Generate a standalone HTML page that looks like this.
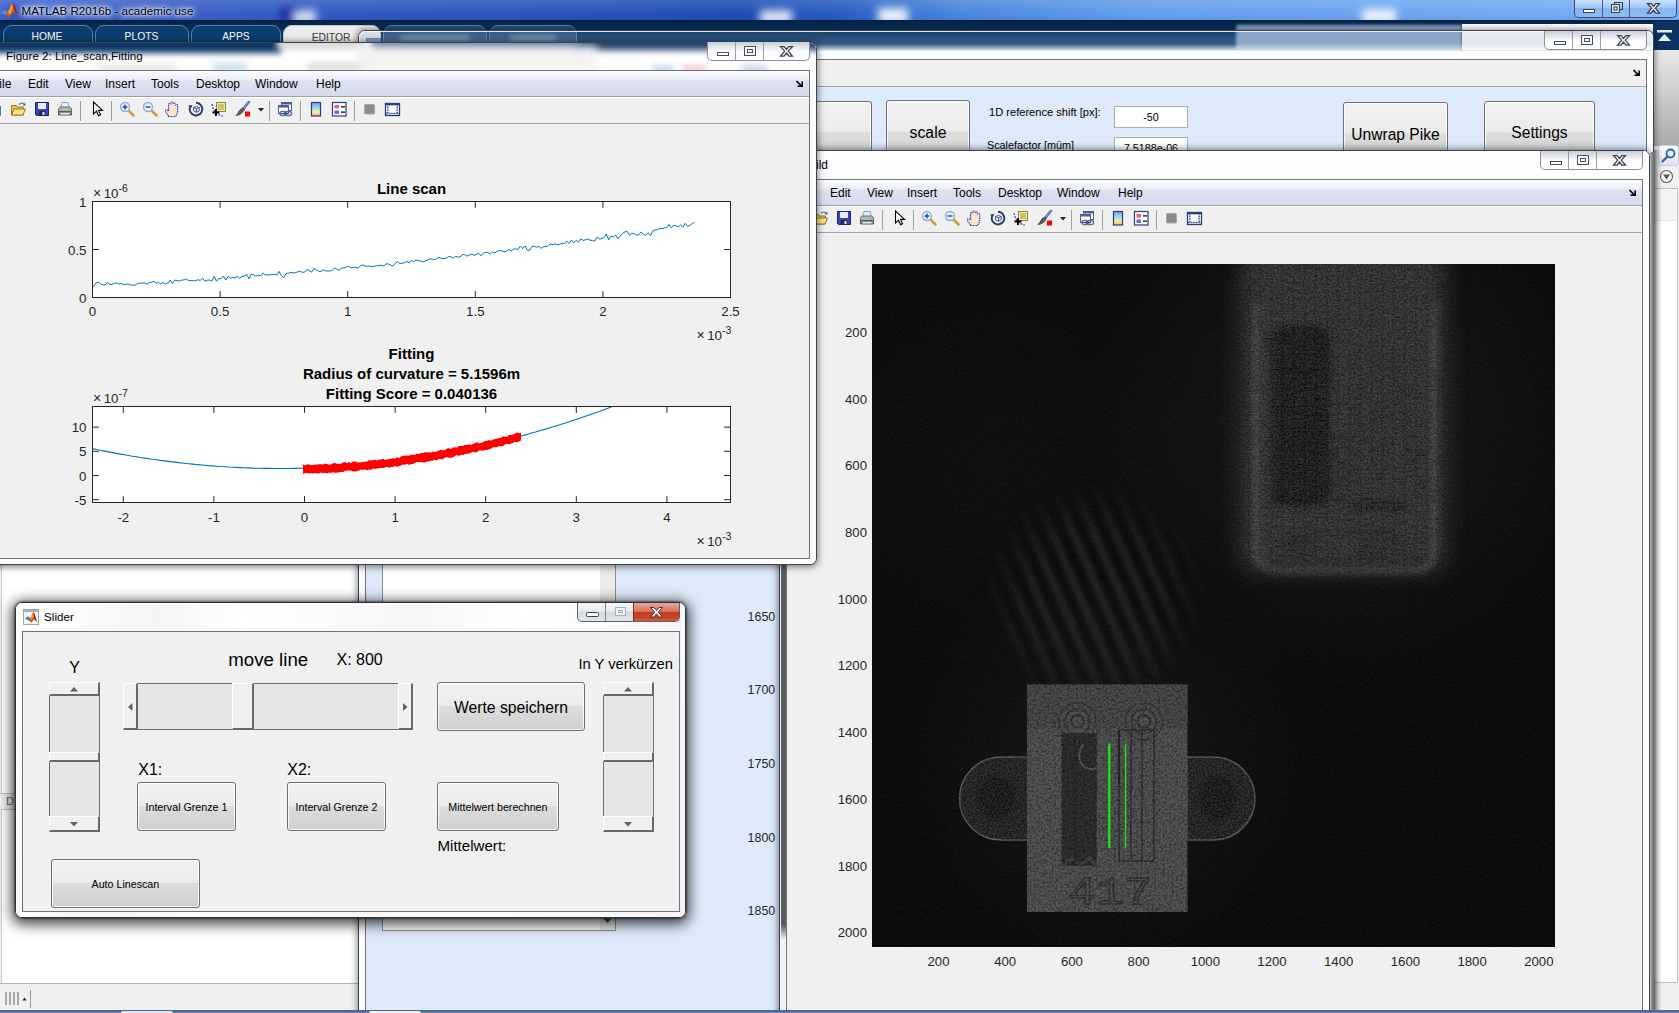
<!DOCTYPE html>
<html lang="en"><head><meta charset="utf-8"><title>MATLAB R2016b - academic use</title>
<style>
html,body{margin:0;padding:0}
body{width:1679px;height:1013px;overflow:hidden;position:relative;background:#f0f0f0;font-family:"Liberation Sans",sans-serif;font-size:12px;color:#000}
div,span,svg{position:absolute;box-sizing:border-box}
.t{white-space:nowrap;line-height:1}
.win{border:1px solid #3c4450;border-radius:7px}
.win::after{content:"";position:absolute;left:0;top:0;right:0;bottom:0;border:1px solid rgba(255,255,255,.85);border-radius:6px}
.cap{border:1px solid #8a8f99;border-top:0;border-radius:0 0 5px 5px;background:linear-gradient(#c9cdd6 0,#eef0f3 40%,#fff 55%,#fff 100%);overflow:hidden}
.cap i{position:absolute;top:0;bottom:0;width:1px;background:#9a9fa8}
.client{border:1px solid #6f7379;background:#f0f0f0;overflow:hidden}
.menubar{left:0;right:0;top:0;height:26px;background:linear-gradient(#fbfcfe 0,#eceef7 35%,#dfe2f0 40%,#d6daec 100%);border-bottom:1px solid #a0a0a0}
.menubar .t{top:7px;font-size:12px}
.toolbar{left:0;right:0;top:26px;height:27px;background:#f0f0f0;border-bottom:1px solid #a5a5a5;border-top:1px solid #fff}
.sep{top:3px;width:1px;height:20px;background:#a0a0a0;border-right:0}
.btn{border:1px solid #707070;border-radius:3px;background:linear-gradient(#f2f2f2 0,#ebebeb 48%,#dddddd 50%,#cfcfcf 100%);box-shadow:inset 0 0 0 1px rgba(255,255,255,.8)}
.btn .t{left:0;right:0;text-align:center}
.tk{font-size:12.4px;color:#262626}
</style></head><body>
<!-- ===== MATLAB main window ===== -->
<div id="mtitle" style="left:0;top:0;width:1679px;height:21px;background:linear-gradient(90deg,#4469cf 0,#3a60c7 12%,#315ac1 22%,#2a55bc 33%,#224fb3 44%,#2a5fc3 50%,#4c88de 57%,#66a0ec 68%,#70a9f1 85%,#7bb2f5 100%);overflow:hidden">
  <div style="left:0;top:0;width:1679px;height:21px;background:linear-gradient(rgba(255,255,255,.12),rgba(255,255,255,0) 60%,rgba(0,0,40,.08))"></div>
  <div style="left:280px;top:8px;width:20px;height:14px;background:#0a1a8a;filter:blur(4px);opacity:.7"></div><div style="left:292px;top:10px;width:24px;height:14px;background:#fff;filter:blur(4px);opacity:.8"></div>
  <div style="left:760px;top:10px;width:32px;height:14px;background:#fff;filter:blur(4px);opacity:.85"></div>
  <div style="left:878px;top:8px;width:30px;height:16px;background:#fff;filter:blur(4px);opacity:.9"></div>
  <div style="left:1362px;top:9px;width:34px;height:14px;background:#fff;filter:blur(4px);opacity:.9"></div>
  <div style="left:4px;top:5px;width:22px;height:16px;background:#1b2fb5;filter:blur(4px);opacity:.35"></div>
  <svg style="left:0;top:2px" width="20" height="18" viewBox="0 0 20 18"><path d="M0 11 L5 8 L8 10 L12 1 L13.5 1.5 L18 13 L13 10 L9 16 L6 13 Z" fill="#d8501c"/><path d="M0 11 L5 8 L8 10 L6 13 Z" fill="#4d8fd0"/><path d="M12 1 L13.5 1.5 L18 13 L15 10 Z" fill="#8c1d10"/><path d="M8 10 L12 1 L13 6 L10 13Z" fill="#f0a030"/></svg>
  <span class="t" style="left:21.500px;top:5px;font-size:11.650px;color:#000;text-shadow:0 0 6px #fff,0 0 6px #fff,0 0 3px #fff">MATLAB R2016b - academic use</span>
  <!-- caption buttons -->
  <div class="cap" style="left:1574px;top:0;width:103px;height:18px;background:linear-gradient(rgba(255,255,255,.55),rgba(255,255,255,.25) 45%,rgba(255,255,255,.05) 50%,rgba(255,255,255,.2));border-color:#3a4a70">
    <i style="left:27px;background:#4a5a80"></i><i style="left:54px;background:#4a5a80"></i>
    <svg style="left:0;top:0" width="103" height="18" viewBox="0 0 103 18"><rect x="8.500" y="9.500" width="11" height="3" fill="#fff" stroke="#3b3f55"/><rect x="39.500" y="2.500" width="8" height="7" fill="none" stroke="#3b3f55"/><rect x="36.500" y="4.500" width="8" height="8" fill="#dfe7f5" stroke="#3b3f55"/><rect x="39" y="7" width="3" height="3" fill="none" stroke="#3b3f55"/><path d="M72.500 3.500h3.600l2.400 2.900 2.400-2.900h3.600l-4.200 4.700 4.200 4.800h-3.600l-2.400-3-2.400 3h-3.600l4.200-4.800z" fill="#fff" stroke="#343a55" stroke-width="1.250"/></svg>
  </div>
</div>
<!-- navy toolstrip band -->
<div style="left:0;top:21px;width:1679px;height:30px;background:linear-gradient(#03244a 0,#0a3461 35%,#0b3866 100%)"></div>
<div style="left:0;top:20px;width:1679px;height:2px;background:#082044"></div>
<!-- tabs -->
<div style="left:3px;top:25px;width:90px;height:24px;border:1px solid #5d82ab;border-radius:9px 9px 0 0;background:#0c3d6e"></div>
<div style="left:95px;top:25px;width:94px;height:24px;border:1px solid #5d82ab;border-radius:9px 9px 0 0;background:#0c3d6e"></div>
<div style="left:191px;top:25px;width:90px;height:24px;border:1px solid #5d82ab;border-radius:9px 9px 0 0;background:#0c3d6e"></div>
<div style="left:283px;top:25px;width:98px;height:24px;border:1px solid #c8c8c8;border-radius:9px 9px 0 0;background:#ececec"></div>
<div style="left:383px;top:25px;width:104px;height:24px;border:1px solid #5d82ab;border-radius:9px 9px 0 0;background:#2a4f7b"></div>
<div style="left:489px;top:25px;width:88px;height:24px;border:1px solid #5d82ab;border-radius:9px 9px 0 0;background:#2a4f7b"></div>
<span class="t" style="left:3px;top:32px;width:88px;text-align:center;font-size:10.300px;color:#fff">HOME</span>
<span class="t" style="left:95px;top:32px;width:93px;text-align:center;font-size:10.300px;color:#fff">PLOTS</span>
<span class="t" style="left:191px;top:32px;width:90px;text-align:center;font-size:10.300px;color:#fff">APPS</span>
<span class="t" style="left:283px;top:33px;width:96px;text-align:center;font-size:10.300px;color:#3a3a3a">EDITOR</span>
<div style="left:400px;top:35px;width:70px;height:6px;background:#7f98b8;filter:blur(2.500px);opacity:.8"></div><div style="left:510px;top:35px;width:46px;height:6px;background:#7f98b8;filter:blur(2.500px);opacity:.8"></div>
<!-- quick access toolbar + search box (behind glass) -->
<div style="left:1236px;top:25px;width:226px;height:24px;background:#8ba5c6;border-radius:3px 0 0 0;filter:blur(1.5px)"></div>
<div style="left:1462px;top:24px;width:192px;height:26px;background:#fff"></div>
<!-- right strip of main window -->
<div style="left:1653px;top:21px;width:26px;height:29px;background:#0a3360"></div>
<svg style="left:1656px;top:29px" width="18" height="14" viewBox="0 0 18 14"><rect x="1" y="1" width="15" height="2.500" fill="#e8eef7"/><path d="M8.500 5 L15 12 H2 Z" fill="#e8eef7"/></svg>
<div style="left:1653px;top:50px;width:26px;height:96px;background:linear-gradient(#e9e9e9,#d0d0d0 40%,#a9a9a9 100%)"></div>
<div style="left:1653px;top:146px;width:26px;height:867px;background:#f0f0f0"></div>
<div style="left:1658px;top:145px;width:21px;height:21px;border:1px solid #c5cad3;border-radius:3px;background:linear-gradient(#fdfdfd,#dfe3ea)"></div>
<svg style="left:1660px;top:147px" width="18" height="18" viewBox="0 0 18 18"><circle cx="10.500" cy="6.500" r="4" fill="#eaf2fb" stroke="#2a62b8" stroke-width="1.800"/><path d="M7.500 9.500 L2.500 14.500" stroke="#2a62b8" stroke-width="2.400" stroke-linecap="round"/></svg>
<svg style="left:1658px;top:168px" width="18" height="18" viewBox="0 0 18 18"><circle cx="8.500" cy="8.500" r="6" fill="#f4f4f4" stroke="#666" stroke-width="1.100"/><path d="M5 6.500h7l-3.500 5z" fill="#555"/></svg>
<div style="left:1654px;top:188px;width:24px;height:795px;background:#fff;border:1px solid #b9bdc4;border-left:0"></div>
<div style="left:1654px;top:189px;width:22px;height:32px;background:#f3f3f3;border-bottom:1px solid #e2e2e2"></div>
<!-- left document area of main window -->
<div style="left:0;top:50px;width:360px;height:934px;background:#fff;border-left:1px solid #f0f0f0"></div><div style="left:1px;top:50px;width:1px;height:934px;background:#c9c9c9"></div>
<div style="left:0;top:983px;width:360px;height:28px;background:#f0f0f0;border-top:1px solid #b4b4b4"></div>
<svg style="left:4px;top:990px" width="30" height="18" viewBox="0 0 30 18"><g fill="#a8a8a8"><rect x="1" y="2" width="2" height="13"/><rect x="5" y="2" width="2" height="13"/><rect x="9" y="2" width="2" height="13"/><rect x="13" y="2" width="2" height="13"/></g><path d="M18.500 10.500h4l-2-3z" fill="#222"/><rect x="26" y="0" width="1" height="18" fill="#9a9a9a"/></svg>
<div style="left:0;top:793px;width:16px;height:17px;background:#f0f0f0;border:1px solid #c4c4c4;border-left:0"></div>
<span class="t" style="left:6px;top:796px;font-size:11px;color:#666">D</span>
<!-- ===== GUI window (scale / Unwrap Pike / Settings) ===== -->
<div class="win" style="left:358px;top:30px;width:1296px;height:1000px;background:linear-gradient(rgba(120,150,190,.14) 0,rgba(150,175,210,.3) 13px,rgba(255,255,255,.9) 20px,#fff 24px,#fdfdfe 100%);box-shadow:0 0 6px 1px rgba(0,0,0,.45)"></div>
<div style="left:366px;top:38px;width:15px;height:12px;border:1px solid #7a8aa0;background:linear-gradient(#7f9fcd 0,#7f9fcd 3px,#eef2f7 3px)"></div>
<div class="cap" style="left:1544px;top:31px;width:103px;height:19px"><i style="left:27px"></i><i style="left:55px"></i>
<svg style="left:0;top:0" width="103" height="19" viewBox="0 0 103 19"><rect x="9.500" y="10.500" width="11" height="3" fill="#fff" stroke="#4a4e63"/><rect x="36.500" y="4.500" width="11" height="9" fill="#fff" stroke="#4a4e63"/><rect x="39.500" y="7.500" width="5" height="3" fill="#fff" stroke="#4a4e63"/><path d="M72.500 4.500h3.600l2.400 2.900 2.400-2.900h3.600l-4.200 4.700 4.200 4.800h-3.600l-2.400-3-2.400 3h-3.600l4.200-4.800z" fill="#fff" stroke="#3d4257" stroke-width="1.250"/></svg></div>
<div class="client" style="left:365px;top:59px;width:1282px;height:952px;background:#deeafa">
  <div style="left:0;top:0;width:1282px;height:27px;background:#f0f0f0;border-bottom:1px solid #a3a3a3"></div>
  <svg style="left:1267px;top:9px" width="8" height="8" viewBox="0 0 8 8"><path d="M0.500 1 L5 5.500 M1.500 6.200h4.700v-4.700" stroke="#000" stroke-width="1.600" fill="none"/></svg>
  <!-- listbox -->
  <div style="left:16px;top:60px;width:234px;height:811px;background:#fff;border:1px solid #8e8f8f"></div>
  <div style="left:234px;top:61px;width:15px;height:809px;background:#ebebeb"></div>
  <svg style="left:237px;top:858px" width="9" height="6" viewBox="0 0 9 6"><path d="M0.500 0.500h8l-4 4.500z" fill="#444"/></svg>
  <!-- axes tick labels -->
  <span class="t tk" style="left:360px;top:551px;width:49.200px;text-align:right">1650</span>
  <span class="t tk" style="left:360px;top:624px;width:49.200px;text-align:right">1700</span>
  <span class="t tk" style="left:360px;top:698px;width:49.200px;text-align:right">1750</span>
  <span class="t tk" style="left:360px;top:772px;width:49.200px;text-align:right">1800</span>
  <span class="t tk" style="left:360px;top:845px;width:49.200px;text-align:right">1850</span>
  <!-- controls (coordinates relative to client: x-366, y-60) -->
  <div class="btn" style="left:430px;top:41px;width:76px;height:64px;border-radius:0 3px 3px 0;border-left:0"></div>
  <div class="btn" style="left:520px;top:40px;width:84px;height:64px"><span class="t" style="top:24px;font-size:15.800px">scale</span></div>
  <span class="t" style="left:623px;top:47px;font-size:11.100px">1D reference shift [px]:</span>
  <div style="left:748px;top:46px;width:74px;height:22px;background:#fff;border:1px solid #abadb3"><span class="t" style="left:0;right:0;top:5px;text-align:center;font-size:10.700px">-50</span></div>
  <span class="t" style="left:621px;top:80px;font-size:10.800px">Scalefactor [müm]</span>
  <div style="left:748px;top:77px;width:74px;height:22px;background:#fff;border:1px solid #abadb3"><span class="t" style="left:0;right:0;top:5px;text-align:center;font-size:10.700px">7.5188e-06</span></div>
  <div class="btn" style="left:977px;top:42px;width:105px;height:64px"><span class="t" style="top:24px;font-size:15.600px">Unwrap Pike</span></div>
  <div class="btn" style="left:1118px;top:41px;width:111px;height:64px"><span class="t" style="top:23px;font-size:15.600px">Settings</span></div>
</div>
<!-- ===== figure window "Bild" with image ===== -->
<div class="win" style="left:779px;top:150px;width:871px;height:880px;background:linear-gradient(90deg,#8a8f96 0,#575b62 2px,#54585f 5px,#6a6e75 6.500px,#b5b8bd 7.500px,#fff 8px,#fff 100%);box-shadow:0 0 7px 1px rgba(0,0,0,.5)"></div>
<div style="left:780px;top:151px;width:869px;height:29px;background:linear-gradient(#fdfdfe,#fff);border-radius:6px 6px 0 0"></div>
<div style="left:780px;top:925px;width:7px;height:90px;background:linear-gradient(rgba(255,255,255,0),#f2f2f2 14px)"></div>
<span class="t" style="left:700px;top:159px;width:128px;text-align:right;font-size:12px">Figure 1: Bild</span>
<div class="cap" style="left:1540px;top:151px;width:103px;height:19px"><i style="left:27px"></i><i style="left:55px"></i><svg style="left:0;top:0" width="103" height="19" viewBox="0 0 103 19"><rect x="9.500" y="10.500" width="11" height="3" fill="#fff" stroke="#4a4e63"/><rect x="36.500" y="4.500" width="11" height="9" fill="#fff" stroke="#4a4e63"/><rect x="39.500" y="7.500" width="5" height="3" fill="#fff" stroke="#4a4e63"/><path d="M72.500 4.500h3.600l2.400 2.900 2.400-2.900h3.600l-4.200 4.700 4.200 4.800h-3.600l-2.400-3-2.400 3h-3.600l4.200-4.800z" fill="#fff" stroke="#3d4257" stroke-width="1.250"/></svg></div>
<div class="client" style="left:786px;top:179px;width:857px;height:832px">
<div class="menubar"><span class="t" style="left:7px">File</span><span class="t" style="left:43px">Edit</span><span class="t" style="left:80px">View</span><span class="t" style="left:120px">Insert</span><span class="t" style="left:166px">Tools</span><span class="t" style="left:211px">Desktop</span><span class="t" style="left:270px">Window</span><span class="t" style="left:331px">Help</span><svg style="left:842px;top:9px" width="8" height="8" viewBox="0 0 8 8"><path d="M0.500 1 L5 5.500 M1.500 6.200h4.700v-4.700" stroke="#000" stroke-width="1.600" fill="none"/></svg></div>
<div class="toolbar"><svg style="left:2px;top:3px" width="16" height="16" viewBox="0 0 16 16"><path d="M2.500 1.500h7l4 4v9h-11z" fill="#fff" stroke="#5b6f9a"/><path d="M9.500 1.500v4h4" fill="#dfe8f7" stroke="#5b6f9a"/></svg><svg style="left:25px;top:3px" width="17" height="16" viewBox="0 0 17 16"><path d="M1.500 4.500h5l1 1.500h6v8h-12z" fill="#e8c04a" stroke="#9a7a1a"/><path d="M1.500 14l2.500-6h11.500l-2.500 6z" fill="#fbe58a" stroke="#9a7a1a"/><path d="M9 3.500c2-2 4-2 5.500 0" fill="none" stroke="#3f62b0" stroke-width="1.200"/><path d="M15.500 1.500v3h-3z" fill="#3f62b0"/></svg><svg style="left:49px;top:3px" width="16" height="16" viewBox="0 0 16 16"><path d="M1.500 1.500h13v13h-12l-1-1z" fill="#3a44b8" stroke="#1c246e"/><rect x="4" y="2" width="8" height="6" fill="#e8ecf8"/><rect x="4.500" y="10" width="7" height="4.500" fill="#20285e"/><rect x="8.500" y="11" width="2" height="3" fill="#e8ecf8"/></svg><svg style="left:72px;top:3px" width="16" height="16" viewBox="0 0 16 16"><path d="M5 1.500h6l1.500 5h-9z" fill="#dfefff" stroke="#8aa0c0"/><path d="M1.500 7.500l2-1.500h9l2 1.500v5h-13z" fill="#b5b5b5" stroke="#6a6a6a"/><path d="M1.500 10.500h13v3.500h-13z" fill="#8c8c8c" stroke="#5a5a5a"/><rect x="3.500" y="12" width="9" height="1.500" fill="#e9e9e9"/><rect x="11.500" y="8.500" width="1.500" height="1" fill="#4c4"/></svg><div class="sep" style="left:95px"></div><svg style="left:104.5px;top:3px" width="16" height="16" viewBox="0 0 16 16"><path d="M3.500 1v12l3-2.800 2 4.600 2-1-2-4.400h4z" fill="#fff" stroke="#000" stroke-width="1.100" stroke-linejoin="miter"/></svg><div class="sep" style="left:126px"></div><svg style="left:134px;top:3px" width="16" height="16" viewBox="0 0 16 16"><path d="M9 9l5.500 5.500" stroke="#d89a3c" stroke-width="2.600" stroke-linecap="round"/><circle cx="6" cy="6" r="4.500" fill="#e9f4ff" stroke="#8ab0dd" stroke-width="1.300"/><path d="M3.500 6h5M6 3.500v5" stroke="#2a3fb0" stroke-width="1.400"/></svg><svg style="left:157px;top:3px" width="16" height="16" viewBox="0 0 16 16"><path d="M9 9l5.500 5.500" stroke="#d89a3c" stroke-width="2.600" stroke-linecap="round"/><circle cx="6" cy="6" r="4.500" fill="#e9f4ff" stroke="#8ab0dd" stroke-width="1.300"/><path d="M3.500 6h5" stroke="#2a3fb0" stroke-width="1.400"/></svg><svg style="left:180px;top:3px" width="16" height="16" viewBox="0 0 16 16"><path transform="translate(-1.3 0) scale(1.22 1)" d="M4 15.500c-.5-2.500-3-4.500-3-6 0-1 1.300-1.300 2.200-.2l.8 1v-6.800c0-1.300 1.800-1.300 1.800 0v-1.500c0-1.300 1.900-1.300 1.900 0v1c0-1.300 1.900-1.300 1.900 0v1.500c0-1.200 1.800-1.200 1.800 0v5.500c0 2.500-1 4-1.500 5.500z" fill="#fde3cc" stroke="#2f4fa8" stroke-width="1" stroke-dasharray="1.500 .7"/></svg><svg style="left:203px;top:3px" width="16" height="16" viewBox="0 0 16 16"><path d="M8 1.800a6.300 6.300 0 1 1-6 4.400" fill="none" stroke="#2c3e70" stroke-width="2"/><path d="M.2 4.500l4.300-.5-2 4z" fill="#2c3e70"/><path d="M5.500 6.500l3-1.200 2.800 1.200v3.300l-2.800 1.500-3-1.500z M5.500 6.500l3 1.200 2.800-1.200M8.500 7.700v3.600" fill="#dfe6f5" stroke="#2c3e70" stroke-width=".8"/></svg><svg style="left:226px;top:3px" width="16" height="16" viewBox="0 0 16 16"><rect x="5.500" y="1.500" width="9" height="9" fill="#f6ec9c" stroke="#8d8632"/><path d="M7 4h6M7 6h6M7 8h6" stroke="#8d8632" stroke-width=".8"/><path d="M1 3c1 6 4 11 11 12" fill="none" stroke="#1c24d8" stroke-width="1.100" stroke-dasharray="2 1.200"/><path d="M1.500 11.500h7M5 8v7" stroke="#000" stroke-width="2"/></svg><svg style="left:250px;top:3px" width="16" height="16" viewBox="0 0 16 16"><path d="M14.800 1.200l-5.500 7-1.500-1.200 5.500-6.800c.8-.8 2 .2 1.500 1z" fill="#7f9be0" stroke="#3c4f9a" stroke-width=".8"/><path d="M7.500 7.200l1.800 1.400c-1 2.800-4.500 5.900-8.300 5.900 2.500-1.500 2.500-5.800 6.500-7.300z" fill="#5d5d5d" stroke="#2a2a2a" stroke-width=".7"/><rect x="10" y="10.500" width="5" height="5" fill="#f00"/></svg><svg style="left:272.5px;top:10px" width="6" height="4" viewBox="0 0 6 4"><path d="M0 0h6l-3 3.500z" fill="#222"/></svg><div class="sep" style="left:284px"></div><svg style="left:292px;top:3px" width="16" height="16" viewBox="0 0 16 16"><rect x="4.500" y="1.500" width="10" height="8" fill="#fff" stroke="#4a5f99"/><rect x="4.500" y="1.500" width="10" height="2" fill="#4a5f99"/><rect x="1.500" y="4.500" width="10" height="8" fill="#fff" stroke="#4a5f99"/><rect x="1.500" y="4.500" width="10" height="2" fill="#4a5f99"/><rect x="3" y="10.500" width="6" height="4" rx="2" fill="none" stroke="#56709f" stroke-width="1.400"/><rect x="8" y="10.500" width="6.500" height="4" rx="2" fill="none" stroke="#56709f" stroke-width="1.400"/><path d="M6 12.500h5" stroke="#2c3e70" stroke-width="1.400"/></svg><div class="sep" style="left:315px"></div><svg style="left:323px;top:3px" width="16" height="16" viewBox="0 0 16 16"><defs><linearGradient id="cbga" x1="0" y1="0" x2="0" y2="1"><stop offset="0" stop-color="#8f8df0"/><stop offset=".35" stop-color="#8fd8f0"/><stop offset=".7" stop-color="#f8f0a0"/><stop offset="1" stop-color="#f0b080"/></linearGradient></defs><rect x="3.500" y="1.500" width="9" height="13.500" fill="url(#cbga)" stroke="#2c3c80" stroke-width="1.200"/></svg><svg style="left:345.5px;top:3px" width="16" height="16" viewBox="0 0 16 16"><rect x="1.500" y="1.500" width="13.500" height="13.500" fill="#fff" stroke="#2c3c80" stroke-width="1.200"/><rect x="3.500" y="4" width="4.500" height="3.500" fill="#e86868"/><rect x="3.500" y="9.500" width="4.500" height="3.500" fill="#6868e8"/><path d="M10 5.800h4M10 11.200h4" stroke="#000" stroke-width="1.300"/></svg><div class="sep" style="left:369px"></div><svg style="left:377px;top:3px" width="16" height="16" viewBox="0 0 16 16"><rect x="2.500" y="3.500" width="10" height="9.500" rx="1" fill="#8c8c8c" stroke="#a8a8a8"/></svg><svg style="left:399px;top:3px" width="17" height="16" viewBox="0 0 17 16"><rect x="1.500" y="2.500" width="14" height="12" fill="#fff" stroke="#2c3c80" stroke-width="1.300"/><rect x="1.500" y="2.500" width="14" height="1.800" fill="#2c3c80"/><path d="M3.800 4.500v7.500M13.200 4.500v7.500M2 12.500h13" stroke="#2c3c80" stroke-width="1.300" stroke-dasharray="1 .6"/></svg></div>
<span class="t tk" style="left:20px;top:145.9px;width:60px;text-align:right;font-size:13.200px">200</span>
<span class="t tk" style="left:121.5px;top:775.200px;width:60px;text-align:center;font-size:13.200px">200</span>
<span class="t tk" style="left:20px;top:212.6px;width:60px;text-align:right;font-size:13.200px">400</span>
<span class="t tk" style="left:188.2px;top:775.200px;width:60px;text-align:center;font-size:13.200px">400</span>
<span class="t tk" style="left:20px;top:279.3px;width:60px;text-align:right;font-size:13.200px">600</span>
<span class="t tk" style="left:254.9px;top:775.200px;width:60px;text-align:center;font-size:13.200px">600</span>
<span class="t tk" style="left:20px;top:346.0px;width:60px;text-align:right;font-size:13.200px">800</span>
<span class="t tk" style="left:321.6px;top:775.200px;width:60px;text-align:center;font-size:13.200px">800</span>
<span class="t tk" style="left:20px;top:412.7px;width:60px;text-align:right;font-size:13.200px">1000</span>
<span class="t tk" style="left:388.3px;top:775.200px;width:60px;text-align:center;font-size:13.200px">1000</span>
<span class="t tk" style="left:20px;top:479.4px;width:60px;text-align:right;font-size:13.200px">1200</span>
<span class="t tk" style="left:455.0px;top:775.200px;width:60px;text-align:center;font-size:13.200px">1200</span>
<span class="t tk" style="left:20px;top:546.1px;width:60px;text-align:right;font-size:13.200px">1400</span>
<span class="t tk" style="left:521.7px;top:775.200px;width:60px;text-align:center;font-size:13.200px">1400</span>
<span class="t tk" style="left:20px;top:612.8px;width:60px;text-align:right;font-size:13.200px">1600</span>
<span class="t tk" style="left:588.4px;top:775.200px;width:60px;text-align:center;font-size:13.200px">1600</span>
<span class="t tk" style="left:20px;top:679.5px;width:60px;text-align:right;font-size:13.200px">1800</span>
<span class="t tk" style="left:655.1px;top:775.200px;width:60px;text-align:center;font-size:13.200px">1800</span>
<span class="t tk" style="left:20px;top:746.2px;width:60px;text-align:right;font-size:13.200px">2000</span>
<span class="t tk" style="left:721.8px;top:775.200px;width:60px;text-align:center;font-size:13.200px">2000</span>
<svg style="left:85px;top:84px" width="683" height="683" viewBox="0 0 683 683"><defs>
<filter color-interpolation-filters="sRGB" id="nz" x="0" y="0" width="100%" height="100%"><feTurbulence type="fractalNoise" baseFrequency="0.75" numOctaves="2" seed="4"/><feColorMatrix type="matrix" values="0 0 0 0 1  0 0 0 0 1  0 0 0 0 1  1.6 1.6 0 0 -1.25"/></filter>
<filter color-interpolation-filters="sRGB" id="nz2" x="0" y="0" width="100%" height="100%"><feTurbulence type="fractalNoise" baseFrequency="0.45" numOctaves="3" seed="11"/><feColorMatrix type="matrix" values="0 0 0 0 0  0 0 0 0 0  0 0 0 0 0  1.8 1.8 0 0 -1.45"/></filter>
<filter color-interpolation-filters="sRGB" id="b6" x="-30%" y="-30%" width="160%" height="160%"><feGaussianBlur stdDeviation="10"/></filter>
<filter color-interpolation-filters="sRGB" id="b3" x="-20%" y="-20%" width="140%" height="140%"><feGaussianBlur stdDeviation="3.500"/></filter>
<filter color-interpolation-filters="sRGB" id="b2" x="-20%" y="-20%" width="140%" height="140%"><feGaussianBlur stdDeviation="2"/></filter>
<filter color-interpolation-filters="sRGB" id="tex" x="-30%" y="-30%" width="160%" height="160%"><feTurbulence type="fractalNoise" baseFrequency="0.55" numOctaves="2" seed="5" result="t"/><feColorMatrix in="t" type="matrix" values="0 0 0 0 1  0 0 0 0 1  0 0 0 0 1  2.2 2.2 0 0 -1.75" result="n"/><feComposite in="n" in2="SourceGraphic" operator="in" result="nn"/><feComposite in="nn" in2="SourceGraphic" operator="arithmetic" k1="0" k2="0.10" k3="1" k4="0"/></filter>
<filter color-interpolation-filters="sRGB" id="tex2" x="-30%" y="-30%" width="160%" height="160%"><feTurbulence type="fractalNoise" baseFrequency="0.55" numOctaves="2" seed="5" result="t"/><feColorMatrix in="t" type="matrix" values="0 0 0 0 1  0 0 0 0 1  0 0 0 0 1  2.2 2.2 0 0 -1.75" result="n"/><feComposite in="n" in2="SourceGraphic" operator="in" result="nn"/><feComposite in="nn" in2="SourceGraphic" operator="arithmetic" k1="0" k2="0.10" k3="1" k4="0" result="s1"/><feTurbulence type="turbulence" baseFrequency="0.09 0.5" numOctaves="2" seed="9" result="t2"/><feColorMatrix in="t2" type="matrix" values="0 0 0 0 1  0 0 0 0 1  0 0 0 0 1  2.5 2.5 0 0 -0.55" result="n2"/><feComposite in="n2" in2="SourceGraphic" operator="in" result="nn2"/><feComposite in="nn2" in2="s1" operator="arithmetic" k1="0" k2="0.045" k3="1" k4="0"/></filter>
<radialGradient id="mg"><stop offset="0" stop-color="#fff"/><stop offset=".55" stop-color="#fff" stop-opacity=".8"/><stop offset="1" stop-color="#fff" stop-opacity="0"/></radialGradient>
<mask id="mS"><ellipse cx="222" cy="335" rx="115" ry="120" fill="url(#mg)"/></mask>
<clipPath id="cpS"><polygon points="120,250 250,215 345,330 330,425 170,425 120,330"/></clipPath>
<clipPath id="cpC"><rect x="155" y="420.500" width="160.500" height="227.500"/></clipPath>
<clipPath id="cpI"><rect x="0" y="0" width="683" height="683"/></clipPath>
<radialGradient id="g1" gradientUnits="userSpaceOnUse" cx="470" cy="160" r="260"><stop offset="0" stop-color="#fff" stop-opacity=".07"/><stop offset="1" stop-color="#fff" stop-opacity="0"/></radialGradient><radialGradient id="g2" gradientUnits="userSpaceOnUse" cx="235" cy="500" r="210"><stop offset="0" stop-color="#fff" stop-opacity=".055"/><stop offset="1" stop-color="#fff" stop-opacity="0"/></radialGradient><radialGradient id="g3" gradientUnits="userSpaceOnUse" cx="120" cy="200" r="220"><stop offset="0" stop-color="#fff" stop-opacity=".02"/><stop offset="1" stop-color="#fff" stop-opacity="0"/></radialGradient>
</defs><g clip-path="url(#cpI)"><rect width="683" height="683" fill="#070707"/><rect width="683" height="683" fill="url(#g1)"/><rect width="683" height="683" fill="url(#g2)"/><rect width="683" height="683" fill="url(#g3)"/><g filter="url(#tex2)"><rect x="368" y="-14" width="206" height="322" rx="16" fill="#1d1d1d" filter="url(#b6)"/><rect x="400" y="62" width="58" height="180" rx="10" fill="#0b0b0b" filter="url(#b3)"/><path d="M472 70 V250" stroke="#3c3c3c" stroke-width="9" filter="url(#b3)"/><path d="M490 110 L470 240 M520 90 L548 235 M505 80 V210" stroke="#1a1a1a" stroke-width="9" fill="none" filter="url(#b3)" opacity=".9"/><rect x="478" y="236" width="56" height="12" rx="5" fill="#141414" filter="url(#b2)"/><rect x="410" y="266" width="36" height="24" rx="6" fill="#181818" filter="url(#b3)"/><rect x="486" y="266" width="40" height="26" rx="6" fill="#181818" filter="url(#b3)"/><path d="M384 40 V285 Q384 306 410 306 H540 Q562 306 562 285 V40" stroke="#353535" stroke-width="6" fill="none" filter="url(#b3)" opacity=".9"/></g><g mask="url(#mS)"><g filter="url(#b2)"><path d="M66 200 L171 440" stroke="#202020" stroke-width="8"/><path d="M87 200 L192 440" stroke="#202020" stroke-width="8"/><path d="M108 200 L213 440" stroke="#202020" stroke-width="8"/><path d="M129 200 L234 440" stroke="#202020" stroke-width="8"/><path d="M150 200 L255 440" stroke="#202020" stroke-width="8"/><path d="M171 200 L276 440" stroke="#202020" stroke-width="8"/><path d="M192 200 L297 440" stroke="#202020" stroke-width="8"/><path d="M213 200 L318 440" stroke="#202020" stroke-width="8"/><path d="M234 200 L339 440" stroke="#202020" stroke-width="8"/><path d="M255 200 L360 440" stroke="#202020" stroke-width="8"/><path d="M276 200 L381 440" stroke="#202020" stroke-width="8"/><path d="M297 200 L402 440" stroke="#202020" stroke-width="8"/></g></g><g filter="url(#tex)"><path d="M156 493 H129 A41.500 41.500 0 0 0 129 576 H156 Z" fill="#161616" stroke="#444" stroke-width="1.500"/><path d="M315 493 H341.500 A41.500 41.500 0 0 1 341.500 576 H315 Z" fill="#161616" stroke="#444" stroke-width="1.500"/><ellipse cx="124" cy="534" rx="18" ry="22" fill="#0e0e0e" filter="url(#b2)"/><ellipse cx="346" cy="534" rx="18" ry="22" fill="#0e0e0e" filter="url(#b2)"/></g><rect x="155" y="420.500" width="160.500" height="227.500" fill="#535353"/><g clip-path="url(#cpC)"><rect x="155" y="420.500" width="160.500" height="44" fill="#4b4b4b"/><circle cx="205.4" cy="457.500" r="3" fill="none" stroke="#606060" stroke-width="1.300"/><circle cx="205.4" cy="457.500" r="6.5" fill="none" stroke="#303030" stroke-width="1.300"/><circle cx="205.4" cy="457.500" r="9.5" fill="none" stroke="#585858" stroke-width="1.300"/><circle cx="205.4" cy="457.500" r="12.5" fill="none" stroke="#323232" stroke-width="1.300"/><circle cx="205.4" cy="457.500" r="15.5" fill="none" stroke="#505050" stroke-width="1.300"/><circle cx="205.4" cy="457.500" r="18.5" fill="none" stroke="#383838" stroke-width="1.300"/><circle cx="271.8" cy="457.500" r="3" fill="none" stroke="#606060" stroke-width="1.300"/><circle cx="271.8" cy="457.500" r="6.5" fill="none" stroke="#303030" stroke-width="1.300"/><circle cx="271.8" cy="457.500" r="9.5" fill="none" stroke="#585858" stroke-width="1.300"/><circle cx="271.8" cy="457.500" r="12.5" fill="none" stroke="#323232" stroke-width="1.300"/><circle cx="271.8" cy="457.500" r="15.5" fill="none" stroke="#505050" stroke-width="1.300"/><circle cx="271.8" cy="457.500" r="18.5" fill="none" stroke="#383838" stroke-width="1.300"/><circle cx="282" cy="625" r="14" fill="none" stroke="#525252" stroke-width="2"/><circle cx="282" cy="625" r="20" fill="none" stroke="#4c4c4c" stroke-width="1.500"/><rect x="189.600" y="469" width="35.200" height="133" fill="#2e2e2e"/><path d="M189.600 602 l10 -8 l8 8 l10 -8 l7.200 8" fill="none" stroke="#424242" stroke-width="3"/><path d="M203 469 V602" stroke="#222" stroke-width="1"/><path d="M212 480 a12 14 0 0 0 12 24" fill="none" stroke="#555" stroke-width="2"/><rect x="247" y="466" width="35" height="131" fill="none" stroke="#1e1e1e" stroke-width="1"/><path d="M259 466V597M270 466V597" stroke="#222" stroke-width="1"/><path d="M247 466V520" stroke="#1c1c1c" stroke-width="1.200"/><text x="196" y="640" font-family="Liberation Mono,monospace" font-size="38" fill="none" stroke="#343434" stroke-width="1.300" textLength="84" lengthAdjust="spacingAndGlyphs">417</text></g><rect width="683" height="683" filter="url(#nz)" opacity=".05"/><rect x="155" y="420.500" width="160.500" height="227.500" filter="url(#nz2)" opacity=".4"/><rect x="236.200" y="479.600" width="2.200" height="104.500" fill="#12ee12"/><rect x="252.900" y="479.600" width="1.300" height="104.500" fill="#12ee12"/></g></svg>
</div>
<div style="left:1650px;top:152px;width:4px;height:859px;background:linear-gradient(90deg,#c4c4c4,#8c8c8c 45%,#6a6a6a)"></div>
<div style="left:1654px;top:150px;width:8px;height:861px;background:linear-gradient(90deg,rgba(60,60,60,.55),rgba(90,90,90,.22) 45%,rgba(120,120,120,0))"></div>
<!-- ===== Figure 2: Line_scan,Fitting ===== -->
<div class="win" style="left:-24px;top:42px;width:841px;height:523px;background:#fff;box-shadow:0 1px 7px 1px rgba(0,0,0,.5)"></div>
<div style="left:-23px;top:43px;width:839px;height:28px;border-radius:6px 6px 0 0;overflow:hidden;background:#fff"><div style="left:-10px;top:-6px;width:314px;height:16px;background:#0b3765;filter:blur(3px)"></div><div style="left:300px;top:-8px;width:90px;height:14px;background:#d9d9d9;filter:blur(3px)"></div><div style="left:395px;top:-7px;width:210px;height:14px;background:#4f6c90;filter:blur(3px)"></div><div style="left:600px;top:-8px;width:250px;height:15px;background:#1c3c66;filter:blur(3.500px)"></div><div style="left:120px;top:21px;width:80px;height:10px;background:#e9e9e9;filter:blur(3px)"></div><div style="left:236px;top:20px;width:34px;height:10px;background:#cfe0f3;filter:blur(3px)"></div><div style="left:330px;top:20px;width:60px;height:8px;background:#dcdcdc;filter:blur(3px)"></div><div style="left:380px;top:2px;width:240px;height:30px;background:#f1f1f1;filter:blur(5px);opacity:.8"></div><div style="left:675px;top:22px;width:22px;height:10px;background:#c9dcf2;filter:blur(3px)"></div><div style="left:705px;top:22px;width:24px;height:10px;background:#f3cdd4;filter:blur(3px)"></div><div style="left:764px;top:22px;width:26px;height:10px;background:#cfd4ea;filter:blur(3px)"></div></div>
<span class="t" style="left:6px;top:50px;font-size:11.600px">Figure 2: Line_scan,Fitting</span>
<div class="cap" style="left:707px;top:42px;width:103px;height:19px"><i style="left:27px"></i><i style="left:55px"></i><svg style="left:0;top:0" width="103" height="19" viewBox="0 0 103 19"><rect x="9.500" y="10.500" width="11" height="3" fill="#fff" stroke="#4a4e63"/><rect x="36.500" y="4.500" width="11" height="9" fill="#fff" stroke="#4a4e63"/><rect x="39.500" y="7.500" width="5" height="3" fill="#fff" stroke="#4a4e63"/><path d="M72.500 4.500h3.600l2.400 2.900 2.400-2.900h3.600l-4.200 4.700 4.200 4.800h-3.600l-2.400-3-2.400 3h-3.600l4.200-4.800z" fill="#fff" stroke="#3d4257" stroke-width="1.250"/></svg></div>
<div class="client" style="left:-16px;top:70px;width:826px;height:489px">
<div class="menubar"><span class="t" style="left:7px">File</span><span class="t" style="left:43px">Edit</span><span class="t" style="left:80px">View</span><span class="t" style="left:120px">Insert</span><span class="t" style="left:166px">Tools</span><span class="t" style="left:211px">Desktop</span><span class="t" style="left:270px">Window</span><span class="t" style="left:331px">Help</span><svg style="left:811px;top:9px" width="8" height="8" viewBox="0 0 8 8"><path d="M0.500 1 L5 5.500 M1.500 6.200h4.700v-4.700" stroke="#000" stroke-width="1.600" fill="none"/></svg></div>
<div class="toolbar"><svg style="left:2px;top:3px" width="16" height="16" viewBox="0 0 16 16"><path d="M2.500 1.500h7l4 4v9h-11z" fill="#fff" stroke="#5b6f9a"/><path d="M9.500 1.500v4h4" fill="#dfe8f7" stroke="#5b6f9a"/></svg><svg style="left:25px;top:3px" width="17" height="16" viewBox="0 0 17 16"><path d="M1.500 4.500h5l1 1.500h6v8h-12z" fill="#e8c04a" stroke="#9a7a1a"/><path d="M1.500 14l2.500-6h11.500l-2.500 6z" fill="#fbe58a" stroke="#9a7a1a"/><path d="M9 3.500c2-2 4-2 5.500 0" fill="none" stroke="#3f62b0" stroke-width="1.200"/><path d="M15.500 1.500v3h-3z" fill="#3f62b0"/></svg><svg style="left:49px;top:3px" width="16" height="16" viewBox="0 0 16 16"><path d="M1.500 1.500h13v13h-12l-1-1z" fill="#3a44b8" stroke="#1c246e"/><rect x="4" y="2" width="8" height="6" fill="#e8ecf8"/><rect x="4.500" y="10" width="7" height="4.500" fill="#20285e"/><rect x="8.500" y="11" width="2" height="3" fill="#e8ecf8"/></svg><svg style="left:72px;top:3px" width="16" height="16" viewBox="0 0 16 16"><path d="M5 1.500h6l1.500 5h-9z" fill="#dfefff" stroke="#8aa0c0"/><path d="M1.500 7.500l2-1.500h9l2 1.500v5h-13z" fill="#b5b5b5" stroke="#6a6a6a"/><path d="M1.500 10.500h13v3.500h-13z" fill="#8c8c8c" stroke="#5a5a5a"/><rect x="3.500" y="12" width="9" height="1.500" fill="#e9e9e9"/><rect x="11.500" y="8.500" width="1.500" height="1" fill="#4c4"/></svg><div class="sep" style="left:95px"></div><svg style="left:104.5px;top:3px" width="16" height="16" viewBox="0 0 16 16"><path d="M3.500 1v12l3-2.800 2 4.600 2-1-2-4.400h4z" fill="#fff" stroke="#000" stroke-width="1.100" stroke-linejoin="miter"/></svg><div class="sep" style="left:126px"></div><svg style="left:134px;top:3px" width="16" height="16" viewBox="0 0 16 16"><path d="M9 9l5.500 5.500" stroke="#d89a3c" stroke-width="2.600" stroke-linecap="round"/><circle cx="6" cy="6" r="4.500" fill="#e9f4ff" stroke="#8ab0dd" stroke-width="1.300"/><path d="M3.500 6h5M6 3.500v5" stroke="#2a3fb0" stroke-width="1.400"/></svg><svg style="left:157px;top:3px" width="16" height="16" viewBox="0 0 16 16"><path d="M9 9l5.500 5.500" stroke="#d89a3c" stroke-width="2.600" stroke-linecap="round"/><circle cx="6" cy="6" r="4.500" fill="#e9f4ff" stroke="#8ab0dd" stroke-width="1.300"/><path d="M3.500 6h5" stroke="#2a3fb0" stroke-width="1.400"/></svg><svg style="left:180px;top:3px" width="16" height="16" viewBox="0 0 16 16"><path transform="translate(-1.3 0) scale(1.22 1)" d="M4 15.500c-.5-2.500-3-4.500-3-6 0-1 1.300-1.300 2.200-.2l.8 1v-6.800c0-1.300 1.800-1.300 1.800 0v-1.500c0-1.300 1.900-1.300 1.900 0v1c0-1.300 1.900-1.300 1.900 0v1.500c0-1.200 1.800-1.200 1.800 0v5.500c0 2.500-1 4-1.500 5.500z" fill="#fde3cc" stroke="#2f4fa8" stroke-width="1" stroke-dasharray="1.500 .7"/></svg><svg style="left:203px;top:3px" width="16" height="16" viewBox="0 0 16 16"><path d="M8 1.800a6.300 6.300 0 1 1-6 4.400" fill="none" stroke="#2c3e70" stroke-width="2"/><path d="M.2 4.500l4.300-.5-2 4z" fill="#2c3e70"/><path d="M5.500 6.500l3-1.200 2.800 1.200v3.300l-2.800 1.500-3-1.500z M5.500 6.500l3 1.200 2.800-1.200M8.500 7.700v3.600" fill="#dfe6f5" stroke="#2c3e70" stroke-width=".8"/></svg><svg style="left:226px;top:3px" width="16" height="16" viewBox="0 0 16 16"><rect x="5.500" y="1.500" width="9" height="9" fill="#f6ec9c" stroke="#8d8632"/><path d="M7 4h6M7 6h6M7 8h6" stroke="#8d8632" stroke-width=".8"/><path d="M1 3c1 6 4 11 11 12" fill="none" stroke="#1c24d8" stroke-width="1.100" stroke-dasharray="2 1.200"/><path d="M1.500 11.500h7M5 8v7" stroke="#000" stroke-width="2"/></svg><svg style="left:250px;top:3px" width="16" height="16" viewBox="0 0 16 16"><path d="M14.800 1.200l-5.500 7-1.500-1.200 5.500-6.800c.8-.8 2 .2 1.500 1z" fill="#7f9be0" stroke="#3c4f9a" stroke-width=".8"/><path d="M7.500 7.200l1.800 1.400c-1 2.800-4.500 5.900-8.300 5.900 2.500-1.500 2.500-5.800 6.500-7.300z" fill="#5d5d5d" stroke="#2a2a2a" stroke-width=".7"/><rect x="10" y="10.500" width="5" height="5" fill="#f00"/></svg><svg style="left:272.5px;top:10px" width="6" height="4" viewBox="0 0 6 4"><path d="M0 0h6l-3 3.500z" fill="#222"/></svg><div class="sep" style="left:284px"></div><svg style="left:292px;top:3px" width="16" height="16" viewBox="0 0 16 16"><rect x="4.500" y="1.500" width="10" height="8" fill="#fff" stroke="#4a5f99"/><rect x="4.500" y="1.500" width="10" height="2" fill="#4a5f99"/><rect x="1.500" y="4.500" width="10" height="8" fill="#fff" stroke="#4a5f99"/><rect x="1.500" y="4.500" width="10" height="2" fill="#4a5f99"/><rect x="3" y="10.500" width="6" height="4" rx="2" fill="none" stroke="#56709f" stroke-width="1.400"/><rect x="8" y="10.500" width="6.500" height="4" rx="2" fill="none" stroke="#56709f" stroke-width="1.400"/><path d="M6 12.500h5" stroke="#2c3e70" stroke-width="1.400"/></svg><div class="sep" style="left:315px"></div><svg style="left:323px;top:3px" width="16" height="16" viewBox="0 0 16 16"><defs><linearGradient id="cbgb" x1="0" y1="0" x2="0" y2="1"><stop offset="0" stop-color="#8f8df0"/><stop offset=".35" stop-color="#8fd8f0"/><stop offset=".7" stop-color="#f8f0a0"/><stop offset="1" stop-color="#f0b080"/></linearGradient></defs><rect x="3.500" y="1.500" width="9" height="13.500" fill="url(#cbgb)" stroke="#2c3c80" stroke-width="1.200"/></svg><svg style="left:345.5px;top:3px" width="16" height="16" viewBox="0 0 16 16"><rect x="1.500" y="1.500" width="13.500" height="13.500" fill="#fff" stroke="#2c3c80" stroke-width="1.200"/><rect x="3.500" y="4" width="4.500" height="3.500" fill="#e86868"/><rect x="3.500" y="9.500" width="4.500" height="3.500" fill="#6868e8"/><path d="M10 5.800h4M10 11.200h4" stroke="#000" stroke-width="1.300"/></svg><div class="sep" style="left:369px"></div><svg style="left:377px;top:3px" width="16" height="16" viewBox="0 0 16 16"><rect x="2.500" y="3.500" width="10" height="9.500" rx="1" fill="#8c8c8c" stroke="#a8a8a8"/></svg><svg style="left:399px;top:3px" width="17" height="16" viewBox="0 0 17 16"><rect x="1.500" y="2.500" width="14" height="12" fill="#fff" stroke="#2c3c80" stroke-width="1.300"/><rect x="1.500" y="2.500" width="14" height="1.800" fill="#2c3c80"/><path d="M3.800 4.500v7.500M13.200 4.500v7.500M2 12.500h13" stroke="#2c3c80" stroke-width="1.300" stroke-dasharray="1 .6"/></svg></div>
<svg style="left:15px;top:53px" width="810" height="434" viewBox="0 124 810 434" font-family="Liberation Sans,sans-serif"><rect x="92.5" y="201.5" width="638.0" height="96.0" fill="#fff" stroke="#262626" stroke-width="1"/><path d="M92.5 297.5v-6.400M92.5 201.5v6.400M220.1 297.5v-6.400M220.1 201.5v6.400M347.7 297.5v-6.400M347.7 201.5v6.400M475.3 297.5v-6.400M475.3 201.5v6.400M602.9 297.5v-6.400M602.9 201.5v6.400M730.5 297.5v-6.400M730.5 201.5v6.400M92.5 297.5h6.400M730.5 297.5h-6.400M92.5 249.5h6.400M730.5 249.5h-6.400M92.5 201.5h6.400M730.5 201.5h-6.400" stroke="#262626" stroke-width="1" fill="none"/><polyline points="93.5,286.9 95.8,283.1 98.1,282.1 100.5,283.8 102.8,285.1 105.1,285.0 107.4,282.4 109.7,284.3 112.1,284.4 114.4,283.4 116.7,282.9 119.0,284.1 121.3,283.3 123.7,284.9 126.0,284.1 128.3,284.1 130.6,285.0 132.9,285.1 135.3,285.1 137.6,283.4 139.9,283.2 142.2,283.2 144.5,282.7 146.9,284.2 149.2,282.6 151.5,282.1 153.8,281.4 156.2,283.1 158.5,282.4 160.8,284.2 163.1,282.3 165.4,284.1 167.8,283.1 170.1,280.1 172.4,283.7 174.7,280.1 177.0,280.5 179.4,281.1 181.7,280.1 184.0,279.9 186.3,279.1 188.6,280.5 191.0,280.7 193.3,280.6 195.6,280.9 197.9,279.7 200.2,280.4 202.6,278.1 204.9,281.3 207.2,280.3 209.5,280.0 211.8,281.1 214.2,276.4 216.5,281.2 218.8,278.6 221.1,278.7 223.4,276.0 225.8,280.1 228.1,276.4 230.4,278.3 232.7,277.5 235.0,277.9 237.4,276.2 239.7,278.1 242.0,276.7 244.3,276.0 246.6,274.2 249.0,278.9 251.3,274.2 253.6,274.7 255.9,276.2 258.3,275.1 260.6,275.8 262.9,273.2 265.2,274.7 267.5,275.0 269.9,274.8 272.2,274.6 274.5,274.4 276.8,275.0 279.1,271.4 281.5,275.8 283.8,277.6 286.1,273.4 288.4,273.2 290.7,272.4 293.1,272.9 295.4,272.7 297.7,271.9 300.0,271.0 302.3,272.4 304.7,272.1 307.0,269.3 309.3,270.7 311.6,272.2 313.9,268.2 316.3,269.8 318.6,271.2 320.9,271.7 323.2,269.8 325.5,270.9 327.9,270.9 330.2,271.0 332.5,269.9 334.8,267.8 337.1,269.4 339.5,270.3 341.8,267.7 344.1,268.1 346.4,267.0 348.7,266.4 351.1,267.8 353.4,267.5 355.7,267.2 358.0,268.2 360.4,265.9 362.7,264.9 365.0,266.0 367.3,266.3 369.6,266.1 372.0,266.5 374.3,266.3 376.6,265.6 378.9,265.8 381.2,265.2 383.6,266.2 385.9,263.8 388.2,263.9 390.5,265.0 392.8,266.1 395.2,263.3 397.5,261.7 399.8,263.6 402.1,263.1 404.4,262.9 406.8,261.3 409.1,262.9 411.4,260.4 413.7,261.7 416.0,260.0 418.4,260.8 420.7,260.8 423.0,262.0 425.3,260.9 427.6,260.1 430.0,258.8 432.3,259.0 434.6,259.9 436.9,258.3 439.2,257.4 441.6,258.5 443.9,258.5 446.2,258.2 448.5,256.6 450.8,256.6 453.2,258.0 455.5,256.3 457.8,257.0 460.1,257.0 462.5,254.5 464.8,254.7 467.1,256.2 469.4,255.0 471.7,254.2 474.1,255.3 476.4,254.4 478.7,253.2 481.0,255.8 483.3,253.1 485.7,252.3 488.0,252.3 490.3,254.2 492.6,252.0 494.9,253.0 497.3,251.1 499.6,250.8 501.9,250.9 504.2,251.8 506.5,251.3 508.9,249.3 511.2,251.1 513.5,249.2 515.8,248.9 518.1,249.5 520.5,246.1 522.8,248.5 525.1,245.8 527.4,250.3 529.7,250.3 532.1,246.3 534.4,246.4 536.7,247.1 539.0,246.5 541.3,248.4 543.7,246.6 546.0,246.8 548.3,245.5 550.6,243.9 552.9,244.6 555.3,243.9 557.6,244.8 559.9,244.2 562.2,243.3 564.6,243.4 566.9,241.3 569.2,243.5 571.5,240.0 573.8,242.9 576.2,240.3 578.5,242.1 580.8,239.0 583.1,240.4 585.4,239.8 587.8,239.0 590.1,240.3 592.4,240.4 594.7,241.2 597.0,237.2 599.4,239.0 601.7,238.6 604.0,237.6 606.3,233.8 608.6,239.9 611.0,236.1 613.3,236.9 615.6,235.0 617.9,238.7 620.2,235.9 622.6,233.4 624.9,231.9 627.2,231.4 629.5,235.3 631.8,233.4 634.2,233.4 636.5,235.2 638.8,235.0 641.1,232.0 643.4,234.1 645.8,235.3 648.1,232.8 650.4,235.5 652.7,231.1 655.0,230.0 657.4,229.8 659.7,228.4 662.0,228.6 664.3,228.1 666.7,227.8 669.0,224.5 671.3,228.0 673.6,225.4 675.9,225.7 678.3,227.0 680.6,224.7 682.9,227.1 685.2,223.3 687.5,226.3 689.9,225.4 692.2,223.6 694.5,222.4" fill="none" stroke="#0072bd" stroke-width="1" stroke-linejoin="round"/><text x="92.5" y="316" text-anchor="middle" fill="#262626" font-size="13.300">0</text><text x="220.1" y="316" text-anchor="middle" fill="#262626" font-size="13.300">0.5</text><text x="347.7" y="316" text-anchor="middle" fill="#262626" font-size="13.300">1</text><text x="475.3" y="316" text-anchor="middle" fill="#262626" font-size="13.300">1.5</text><text x="602.9" y="316" text-anchor="middle" fill="#262626" font-size="13.300">2</text><text x="730.5" y="316" text-anchor="middle" fill="#262626" font-size="13.300">2.5</text><text x="86.500" y="302.6" text-anchor="end" fill="#262626" font-size="13.300">0</text><text x="86.500" y="254.6" text-anchor="end" fill="#262626" font-size="13.300">0.5</text><text x="86.500" y="206.6" text-anchor="end" fill="#262626" font-size="13.300">1</text><text x="93" y="198" fill="#262626" font-size="13.300"><tspan font-size="14">×</tspan><tspan dx="2.500">10</tspan><tspan font-size="10.600" dy="-6.300">-6</tspan></text><text x="696.5" y="340" fill="#262626" font-size="13.300"><tspan font-size="14">×</tspan><tspan dx="2.500">10</tspan><tspan font-size="10.600" dy="-6.300">-3</tspan></text><text x="411.500" y="194" text-anchor="middle" font-weight="bold" font-size="15" fill="#000">Line scan</text><rect x="92.5" y="406.5" width="638.0" height="96.0" fill="#fff" stroke="#262626" stroke-width="1"/><path d="M123.3 502.5v-6.400M123.3 406.5v6.400M213.9 502.5v-6.400M213.9 406.5v6.400M304.5 502.5v-6.400M304.5 406.5v6.400M395.1 502.5v-6.400M395.1 406.5v6.400M485.7 502.5v-6.400M485.7 406.5v6.400M576.3 502.5v-6.400M576.3 406.5v6.400M666.9 502.5v-6.400M666.9 406.5v6.400M92.5 499.7h6.400M730.5 499.7h-6.400M92.5 475.5h6.400M730.5 475.5h-6.400M92.5 451.3h6.400M730.5 451.3h-6.400M92.5 427.1h6.400M730.5 427.1h-6.400" stroke="#262626" stroke-width="1" fill="none"/><clipPath id="cp2"><rect x="92.500" y="406.500" width="638" height="96"/></clipPath><polyline clip-path="url(#cp2)" points="92.5,448.6 96.5,449.5 100.5,450.3 104.5,451.1 108.5,451.9 112.5,452.6 116.5,453.4 120.5,454.1 124.5,454.8 128.5,455.5 132.5,456.2 136.5,456.8 140.5,457.5 144.5,458.1 148.5,458.7 152.5,459.3 156.5,459.8 160.5,460.4 164.5,460.9 168.5,461.4 172.5,461.9 176.5,462.4 180.5,462.9 184.5,463.3 188.5,463.7 192.5,464.1 196.5,464.5 200.5,464.9 204.5,465.2 208.5,465.6 212.5,465.9 216.5,466.2 220.5,466.5 224.5,466.7 228.5,467.0 232.5,467.2 236.5,467.4 240.5,467.6 244.5,467.8 248.5,467.9 252.5,468.1 256.5,468.2 260.5,468.3 264.5,468.4 268.5,468.4 272.5,468.5 276.5,468.5 280.5,468.5 284.5,468.5 288.5,468.5 292.5,468.4 296.5,468.4 300.5,468.3 304.5,468.2 308.5,468.1 312.5,467.9 316.5,467.8 320.5,467.6 324.5,467.4 328.5,467.2 332.5,467.0 336.5,466.7 340.5,466.5 344.5,466.2 348.5,465.9 352.5,465.6 356.5,465.3 360.5,464.9 364.5,464.5 368.5,464.2 372.5,463.8 376.5,463.3 380.5,462.9 384.5,462.4 388.5,462.0 392.5,461.5 396.5,461.0 400.5,460.4 404.5,459.9 408.5,459.3 412.5,458.7 416.5,458.1 420.5,457.5 424.5,456.9 428.5,456.2 432.5,455.5 436.5,454.8 440.5,454.1 444.5,453.4 448.5,452.7 452.5,451.9 456.5,451.1 460.5,450.3 464.5,449.5 468.5,448.7 472.5,447.8 476.5,446.9 480.5,446.0 484.5,445.1 488.5,444.2 492.5,443.3 496.5,442.3 500.5,441.3 504.5,440.3 508.5,439.3 512.5,438.3 516.5,437.2 520.5,436.2 524.5,435.1 528.5,434.0 532.5,432.8 536.5,431.7 540.5,430.5 544.5,429.4 548.5,428.2 552.5,427.0 556.5,425.7 560.5,424.5 564.5,423.2 568.5,421.9 572.5,420.6 576.5,419.3 580.5,418.0 584.5,416.6 588.5,415.2 592.5,413.8 596.5,412.4 600.5,411.0 604.5,409.5 608.5,408.1 612.5,406.6" fill="none" stroke="#0072bd" stroke-width="1.100"/><polygon points="303.0,464.3 305.0,465.4 307.0,464.2 309.0,464.6 311.0,465.3 313.0,465.3 315.0,464.5 317.0,464.5 319.0,464.3 321.0,464.3 323.0,464.4 325.0,463.4 327.0,464.0 329.0,464.8 331.0,464.6 333.0,463.3 335.0,463.0 337.0,463.8 339.0,463.9 341.0,463.7 343.0,462.4 345.0,462.1 347.0,463.3 349.0,461.9 351.0,463.2 353.0,461.5 355.0,461.5 357.0,462.3 359.0,462.7 361.0,462.2 363.0,462.0 365.0,461.7 367.0,461.6 369.0,460.1 371.0,460.8 373.0,460.0 375.0,459.8 377.0,460.5 379.0,459.6 381.0,459.4 383.0,458.7 385.0,460.0 387.0,459.4 389.0,459.0 391.0,458.8 393.0,458.2 395.0,458.7 397.0,457.0 399.0,458.2 401.0,456.5 403.0,455.7 405.0,455.5 407.0,455.4 409.0,455.8 411.0,454.8 413.0,454.7 415.0,454.7 417.0,453.7 419.0,453.9 421.0,453.0 423.0,453.0 425.0,452.3 427.0,452.6 429.0,452.3 431.0,452.6 433.0,451.6 435.0,451.9 437.0,451.4 439.0,450.5 441.0,449.8 443.0,450.2 445.0,450.1 447.0,448.6 449.0,448.2 451.0,449.0 453.0,447.6 455.0,447.3 457.0,447.6 459.0,446.1 461.0,446.0 463.0,446.1 465.0,444.7 467.0,445.1 469.0,444.2 471.0,445.1 473.0,444.0 475.0,443.1 477.0,442.3 479.0,443.3 481.0,442.9 483.0,442.2 485.0,440.9 487.0,441.0 489.0,439.9 491.0,440.7 493.0,439.4 495.0,438.9 497.0,438.8 499.0,438.0 501.0,437.7 503.0,436.3 505.0,436.7 507.0,436.7 509.0,435.1 511.0,435.0 513.0,434.6 515.0,433.5 517.0,432.5 519.0,433.2 521.0,432.7 521.0,440.6 519.0,441.4 517.0,442.3 515.0,441.8 513.0,442.9 511.0,443.6 509.0,444.4 507.0,443.8 505.0,444.3 503.0,446.2 501.0,446.2 499.0,445.9 497.0,447.3 495.0,447.2 493.0,447.2 491.0,448.7 489.0,449.3 487.0,449.9 485.0,450.1 483.0,450.7 481.0,450.5 479.0,450.5 477.0,452.3 475.0,452.4 473.0,451.8 471.0,452.7 469.0,453.5 467.0,453.7 465.0,453.9 463.0,454.9 461.0,454.8 459.0,456.0 457.0,455.1 455.0,456.1 453.0,457.3 451.0,457.7 449.0,457.7 447.0,457.3 445.0,457.6 443.0,459.3 441.0,459.2 439.0,458.7 437.0,460.4 435.0,459.7 433.0,460.6 431.0,460.7 429.0,461.5 427.0,461.4 425.0,462.5 423.0,462.4 421.0,462.0 419.0,462.3 417.0,462.0 415.0,462.7 413.0,464.1 411.0,464.1 409.0,464.9 407.0,463.8 405.0,464.8 403.0,464.5 401.0,465.5 399.0,466.1 397.0,466.7 395.0,465.9 393.0,467.1 391.0,467.1 389.0,467.8 387.0,466.9 385.0,467.6 383.0,468.0 381.0,468.1 379.0,468.3 377.0,468.5 375.0,469.1 373.0,468.5 371.0,469.9 369.0,469.2 367.0,470.5 365.0,469.2 363.0,470.1 361.0,469.4 359.0,470.6 357.0,471.2 355.0,471.4 353.0,471.6 351.0,470.5 349.0,470.5 347.0,470.6 345.0,470.9 343.0,471.9 341.0,472.0 339.0,472.3 337.0,472.8 335.0,472.8 333.0,472.3 331.0,473.0 329.0,472.4 327.0,473.4 325.0,472.7 323.0,473.2 321.0,472.5 319.0,473.4 317.0,473.5 315.0,473.0 313.0,473.5 311.0,473.2 309.0,473.6 307.0,472.9 305.0,473.3 303.0,473.7" fill="#ff0000"/><text x="123.3" y="522" text-anchor="middle" fill="#262626" font-size="13.300">-2</text><text x="213.9" y="522" text-anchor="middle" fill="#262626" font-size="13.300">-1</text><text x="304.5" y="522" text-anchor="middle" fill="#262626" font-size="13.300">0</text><text x="395.1" y="522" text-anchor="middle" fill="#262626" font-size="13.300">1</text><text x="485.7" y="522" text-anchor="middle" fill="#262626" font-size="13.300">2</text><text x="576.3" y="522" text-anchor="middle" fill="#262626" font-size="13.300">3</text><text x="666.9" y="522" text-anchor="middle" fill="#262626" font-size="13.300">4</text><text x="86.500" y="504.8" text-anchor="end" fill="#262626" font-size="13.300">-5</text><text x="86.500" y="480.6" text-anchor="end" fill="#262626" font-size="13.300">0</text><text x="86.500" y="456.4" text-anchor="end" fill="#262626" font-size="13.300">5</text><text x="86.500" y="432.2" text-anchor="end" fill="#262626" font-size="13.300">10</text><text x="93" y="403" fill="#262626" font-size="13.300"><tspan font-size="14">×</tspan><tspan dx="2.500">10</tspan><tspan font-size="10.600" dy="-6.300">-7</tspan></text><text x="696.5" y="546" fill="#262626" font-size="13.300"><tspan font-size="14">×</tspan><tspan dx="2.500">10</tspan><tspan font-size="10.600" dy="-6.300">-3</tspan></text><text x="411.500" y="359" text-anchor="middle" font-weight="bold" font-size="15" fill="#000">Fitting</text><text x="411.500" y="379" text-anchor="middle" font-weight="bold" font-size="15" fill="#000">Radius of curvature = 5.1596m</text><text x="411.500" y="399" text-anchor="middle" font-weight="bold" font-size="15" fill="#000">Fitting Score = 0.040136</text></svg>
</div>
<!-- ===== Slider window (active) ===== -->
<div class="win" style="left:15px;top:602px;width:671px;height:316px;border-color:#2b2f36;background:linear-gradient(100deg,#fff 0,#f4f5f6 20%,#fff 32%,#f5f6f7 55%,#fff 70%,#f3f4f6 100%);box-shadow:0 3px 14px 3px rgba(0,0,0,.75),0 0 3px rgba(0,0,0,.8)"></div>
<svg style="left:23px;top:609px" width="16" height="16" viewBox="0 0 16 16"><rect x=".5" y=".5" width="15" height="15" fill="#f4f4f4" stroke="#9aa3b0"/><rect x="1" y="1" width="14" height="2" fill="#9fb6d4"/><path d="M2 9.500l3.500-2 2 1.500 2.500-5.500 1 .3 3 9-3-2.500-2.500 3.500-2-2z" fill="#d8501c"/><path d="M2 9.500l3.500-2 2 1.500-1.500 2.500z" fill="#4d7fc0"/><path d="M10 3.500l1 .3 3 9-2.200-2.300z" fill="#8c1d10"/><path d="M7.500 9l2.500-5.500.6 3.500-1.800 4z" fill="#f0a030"/></svg>
<span class="t" style="left:44px;top:611px;font-size:11.700px">Slider</span>
<div class="cap" style="left:577px;top:603px;width:103px;height:19px;border-color:#5a606b;background:linear-gradient(#f6f7f9 0,#e9ebee 45%,#d5d8dd 50%,#e3e5e9 100%)"><div style="left:55px;top:0;width:48px;height:19px;background:linear-gradient(#e9a899 0,#d9705c 45%,#c53a24 50%,#c9452c 80%,#d86a4a 100%)"></div><i style="left:27px;background:#7d838e"></i><i style="left:55px;background:#6b3028"></i><svg style="left:0;top:0" width="103" height="19" viewBox="0 0 103 19"><rect x="8.500" y="9.500" width="12" height="4" rx="1" fill="#fff" stroke="#3d4150"/><rect x="37.500" y="4.500" width="10" height="8" fill="#f1f2f4" stroke="#a9adb5"/><rect x="40.500" y="7.500" width="4" height="2" fill="none" stroke="#a9adb5"/><path d="M72.500 4.500h3.400l2.600 3 2.600-3h3.400l-4.300 4.700 4.300 4.800h-3.400l-2.600-3.100-2.600 3.100h-3.400l4.300-4.800z" fill="#fff" stroke="#4b2a2a" stroke-width="1"/></svg></div>
<div class="client" style="left:22px;top:631px;width:658px;height:281px">
<span class="t" style="left:46.2px;top:28.0px;font-size:16px;">Y</span>
<div style="left:26.3px;top:50px;width:50.4px;height:149px;background:#e6e6e6;border-left:1px solid #6d6d6d;border-right:1px solid #6d6d6d"></div><div style="left:26.3px;top:50px;width:50.4px;height:14px;background:#f0f0f0;border:1px solid #fff;border-right:2px solid #696969;border-bottom:2px solid #696969"></div><svg style="left:47.0px;top:55px" width="8" height="5" viewBox="0 0 8 5"><path d="M0 4.500h8l-4-4.500z" fill="#606060"/></svg><div style="left:26.3px;top:120px;width:50.4px;height:10px;background:#f0f0f0;border:1px solid #fff;border-right:2px solid #696969;border-bottom:2px solid #696969"></div><div style="left:26.3px;top:184px;width:50.4px;height:15.500px;background:#f0f0f0;border:1px solid #fff;border-right:2px solid #696969;border-bottom:2px solid #696969"></div><svg style="left:47.0px;top:190px" width="8" height="5" viewBox="0 0 8 5"><path d="M0 0h8l-4 4.500z" fill="#606060"/></svg>
<span class="t" style="left:205.3px;top:19.2px;font-size:18.67px;">move line</span>
<span class="t" style="left:313.5px;top:20.1px;font-size:16px;">X: 800</span>
<div style="left:99.6px;top:51.3px;width:290.300px;height:47px;background:#e6e6e6;border-top:1px solid #6d6d6d;border-bottom:1px solid #6d6d6d"></div>
<div style="left:99.6px;top:51.3px;width:15px;height:47px;background:#f0f0f0;border:1px solid #fff;border-right:2px solid #696969;border-bottom:2px solid #696969"></div>
<svg style="left:104.6px;top:71.3px" width="5" height="8" viewBox="0 0 5 8"><path d="M4.500 0v8l-4.500-4z" fill="#606060"/></svg>
<div style="left:208.5px;top:51.3px;width:22px;height:47px;background:#f0f0f0;border:1px solid #fff;border-right:2px solid #696969;border-bottom:2px solid #696969"></div>
<div style="left:374.5px;top:51.3px;width:15.400px;height:47px;background:#f0f0f0;border:1px solid #fff;border-right:2px solid #696969;border-bottom:2px solid #696969"></div>
<svg style="left:379.5px;top:71.3px" width="5" height="8" viewBox="0 0 5 8"><path d="M0 0v8l4.500-4z" fill="#606060"/></svg>
<div class="btn" style="left:414.1px;top:50.2px;width:147.8px;height:48.4px"><span class="t" style="top:16.8px;font-size:15.7px">Werte speichern</span></div>
<span class="t" style="left:555.4px;top:24.5px;font-size:14.76px;">In Y verkürzen</span>
<div style="left:580.3px;top:50px;width:50.8px;height:149px;background:#e6e6e6;border-left:1px solid #6d6d6d;border-right:1px solid #6d6d6d"></div><div style="left:580.3px;top:50px;width:50.8px;height:14px;background:#f0f0f0;border:1px solid #fff;border-right:2px solid #696969;border-bottom:2px solid #696969"></div><svg style="left:601.2px;top:55px" width="8" height="5" viewBox="0 0 8 5"><path d="M0 4.500h8l-4-4.500z" fill="#606060"/></svg><div style="left:580.3px;top:120px;width:50.8px;height:10px;background:#f0f0f0;border:1px solid #fff;border-right:2px solid #696969;border-bottom:2px solid #696969"></div><div style="left:580.3px;top:184px;width:50.8px;height:15.500px;background:#f0f0f0;border:1px solid #fff;border-right:2px solid #696969;border-bottom:2px solid #696969"></div><svg style="left:601.2px;top:190px" width="8" height="5" viewBox="0 0 8 5"><path d="M0 0h8l-4 4.500z" fill="#606060"/></svg>
<span class="t" style="left:115.3px;top:130.2px;font-size:16px;">X1:</span>
<span class="t" style="left:264.3px;top:130.2px;font-size:16px;">X2:</span>
<div class="btn" style="left:114.2px;top:150.2px;width:98.6px;height:49.1px"><span class="t" style="top:18.9px;font-size:10.7px">Interval Grenze 1</span></div>
<div class="btn" style="left:264.3px;top:150.2px;width:98.4px;height:49.1px"><span class="t" style="top:18.9px;font-size:10.7px">Interval Grenze 2</span></div>
<div class="btn" style="left:414.1px;top:150.2px;width:121.6px;height:49.1px"><span class="t" style="top:18.9px;font-size:10.7px">Mittelwert berechnen</span></div>
<span class="t" style="left:414.5px;top:206.2px;font-size:15.1px;">Mittelwert:</span>
<div class="btn" style="left:28.0px;top:227.0px;width:148.8px;height:49.0px"><span class="t" style="top:18.9px;font-size:10.7px">Auto Linescan</span></div>
</div>
<!-- bottom edge (taskbar peeking) -->
<div style="left:0;top:1010px;width:1679px;height:3px;background:linear-gradient(#5d6b85,#41649e 45%,#6d8fc4)"></div>
<div style="left:121px;top:1011px;width:52px;height:2px;background:#dfe6f0;border-radius:2px 2px 0 0"></div>
<div style="left:369px;top:1011px;width:52px;height:2px;background:#eef2f8;border-radius:2px 2px 0 0"></div>
</body></html>
